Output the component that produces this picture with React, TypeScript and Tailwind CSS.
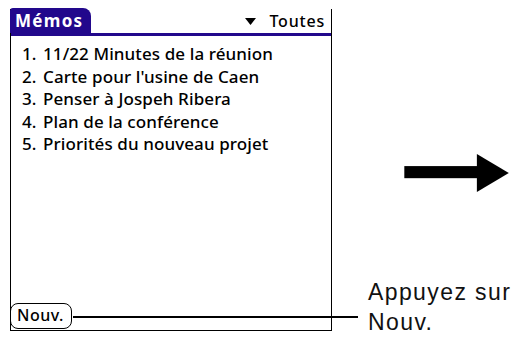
import React from 'react';

const memos = [
  "11/22 Minutes de la réunion",
  "Carte pour l'usine de Caen",
  "Penser à Jospeh Ribera",
  "Plan de la conférence",
  "Priorités du nouveau projet",
];

const palm = { fontFamily: '"Noto Sans", "DejaVu Sans", sans-serif' };

export default function App() {
  return (
    <div className="relative flex w-[520px] h-[337px] bg-white overflow-hidden">
      {/* handheld screen */}
      <div
        className="ml-[10px] mt-[9px] w-[322px] h-[322px] flex flex-col border-r border-b border-l border-black"
        style={palm}
      >
        <div className="flex items-end justify-between h-[27px] border-b-[3px] border-[#22088c]">
          <div className="h-[25px] pl-[5px] pr-[8px] -ml-px bg-[#22088c] rounded-tr-[8px] rounded-tl-[3px] text-white text-[17px] font-bold leading-[25px] tracking-[1.3px]">
            Mémos
          </div>
          <div className="flex items-center gap-[13px] pr-[6px] pb-[2px] text-[16px] leading-[19px] text-black font-medium">
            <svg width="11" height="7" viewBox="0 0 11 7">
              <path d="M0 0 H11 L5.5 7 Z" fill="#000" />
            </svg>
            <span className="tracking-[0.8px]">Toutes</span>
          </div>
        </div>

        <ol className="flex-1 pt-[7px] pl-[11px] text-[17px] leading-[22.5px] tracking-[0.1px] text-black font-medium">
          {memos.map((m, i) => (
            <li key={i} className="flex">
              <span className="w-[21px]">{i + 1}.</span>
              <span>{m}</span>
            </li>
          ))}
        </ol>

        <div className="flex items-center pb-[1px]">
          <div className="h-[26px] pl-[6px] pr-[7px] -ml-px border-[1.5px] border-black rounded-[8px] text-[16px] leading-[22px] tracking-[0.5px] text-black font-medium">
            Nouv.
          </div>
        </div>
      </div>

      {/* callout line from the button */}
      <div className="absolute left-[73px] top-[316px] w-[285px] h-[1.5px] bg-black" />

      {/* right side: arrow and hint */}
      <div className="flex flex-col ml-[36px]">
        <svg className="mt-[154px] ml-[28px]" width="122" height="44" viewBox="0 0 122 44">
          <rect x="0" y="14" width="86" height="14" fill="#000" />
          <path d="M84 0 L121 22 L84 44 Z" fill="#000" />
        </svg>
        <div
          className="mt-[85px] text-[23px] leading-[30px] tracking-[1.4px] text-[#111]"
          style={{ fontFamily: '"Liberation Sans", Arial, sans-serif' }}
        >
          Appuyez sur
          <br />
          Nouv.
        </div>
      </div>
    </div>
  );
}
